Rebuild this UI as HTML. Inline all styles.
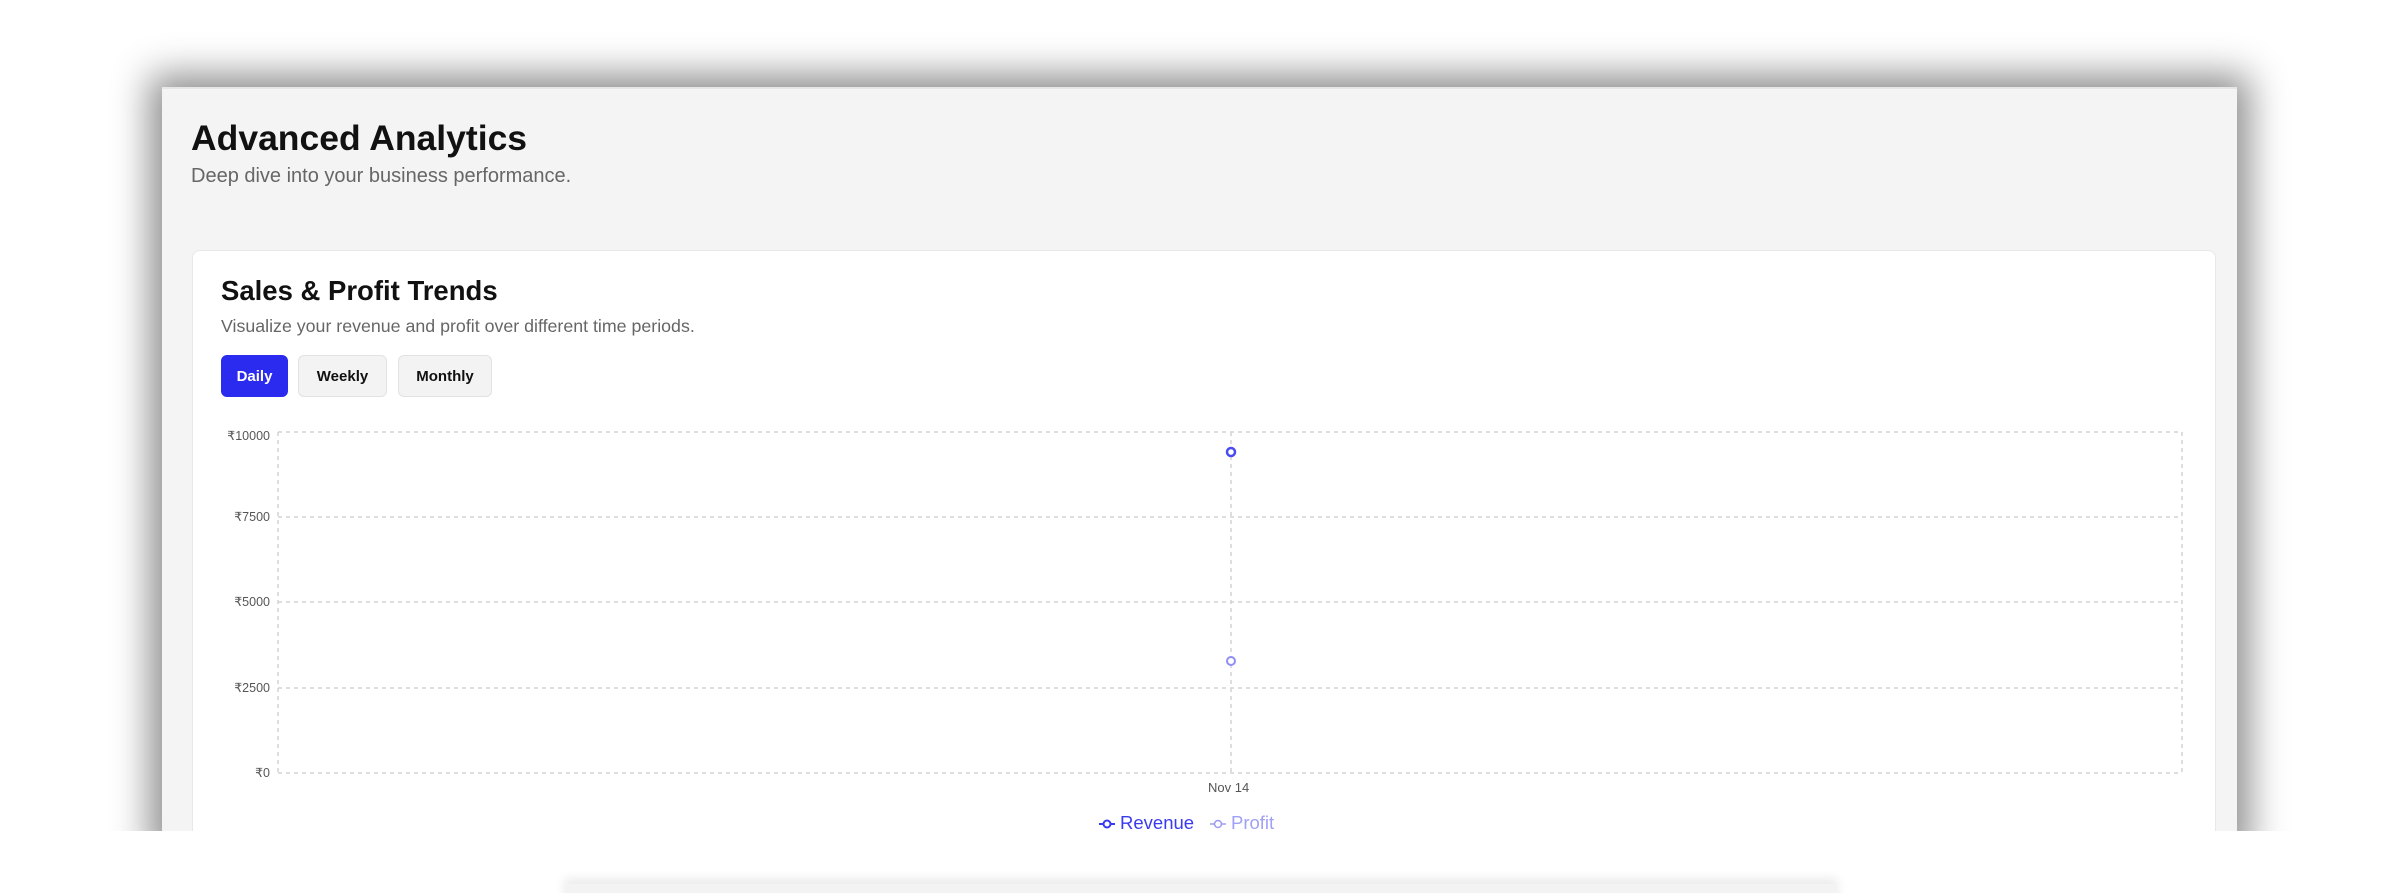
<!DOCTYPE html>
<html><head><meta charset="utf-8"><style>
*{margin:0;padding:0;box-sizing:border-box}
html,body{width:2400px;height:893px;overflow:hidden}
body{background:#fff;position:relative;font-family:"Liberation Sans",sans-serif}
.win{position:absolute;left:162px;top:87px;width:2075px;height:760px;background:#f4f4f4;box-shadow:0 0 35px 12px rgba(0,0,0,.45);border-top:2px solid #e6e6e6}
.a{position:absolute;white-space:nowrap}
.card{position:absolute;left:192px;top:250px;width:2024px;height:640px;background:#fff;border:1px solid #e8e8e8;border-radius:8px}
.btn{position:absolute;top:355px;height:42px;border-radius:6px;font-size:15px;font-weight:bold;line-height:42px;text-align:center;background:#f3f3f3;border:1px solid #e2e2e2;color:#111}
.yl{position:absolute;right:2130px;font-size:12.5px;color:#555;text-align:right}
.cover{position:absolute;left:0;top:831px;width:2400px;height:62px;background:#fff;z-index:5}
.bar{position:absolute;left:566px;top:884px;width:1270px;height:20px;background:#f3f3f3;box-shadow:0 -4px 10px 2px rgba(0,0,0,.08);z-index:6}
</style></head><body>
<div class="win"></div>
<div class="a" style="left:191px;top:118px;font-size:35.5px;font-weight:bold;color:#111">Advanced Analytics</div>
<div class="a" style="left:191px;top:165px;font-size:20px;color:#666">Deep dive into your business performance.</div>
<div class="card"></div>
<div class="a" style="left:221px;top:275px;font-size:27.5px;font-weight:bold;color:#111">Sales &amp; Profit Trends</div>
<div class="a" style="left:221px;top:316px;font-size:17.8px;color:#666">Visualize your revenue and profit over different time periods.</div>
<div class="btn" style="left:221px;width:67px;background:#2b2bf0;border-color:#2b2bf0;color:#fff">Daily</div>
<div class="btn" style="left:298px;width:89px">Weekly</div>
<div class="btn" style="left:398px;width:94px">Monthly</div>
<svg class="a" style="left:0;top:0" width="2400" height="893">
<g stroke="#d4d4d4" stroke-width="1.5" stroke-dasharray="4 4" fill="none">
<line x1="278" y1="432" x2="2182" y2="432"/>
<line x1="278" y1="517" x2="2182" y2="517"/>
<line x1="278" y1="602" x2="2182" y2="602"/>
<line x1="278" y1="688" x2="2182" y2="688"/>
<line x1="278" y1="773" x2="2182" y2="773"/>
<line x1="278" y1="432" x2="278" y2="773"/>
<line x1="2182" y1="432" x2="2182" y2="773"/>
<line x1="1231" y1="432" x2="1231" y2="773"/>
</g>
<circle cx="1231" cy="452" r="4" fill="#fff" stroke="#4b4bf2" stroke-width="2.5"/>
<circle cx="1231" cy="661" r="4" fill="#fff" stroke="#8f8ff5" stroke-width="2"/>
<line x1="1099" y1="824" x2="1115" y2="824" stroke="#3a3af0" stroke-width="2"/>
<circle cx="1107" cy="824" r="3.5" fill="#fff" stroke="#3a3af0" stroke-width="2"/>
<line x1="1210" y1="824" x2="1226" y2="824" stroke="#9a9af5" stroke-width="1.5"/>
<circle cx="1218" cy="824" r="3.5" fill="#fff" stroke="#9a9af5" stroke-width="1.5"/>
</svg>
<div class="yl" style="top:428px">₹10000</div>
<div class="yl" style="top:509px">₹7500</div>
<div class="yl" style="top:594px">₹5000</div>
<div class="yl" style="top:680px">₹2500</div>
<div class="yl" style="top:765px">₹0</div>
<div class="a" style="left:1208px;top:780px;font-size:13px;color:#555">Nov 14</div>
<div class="a" style="left:1120px;top:812px;font-size:18.5px;color:#3a3af0">Revenue</div>
<div class="a" style="left:1231px;top:812px;font-size:18.5px;color:#a0a0f6">Profit</div>
<div class="cover"></div>
<div class="bar"></div>
</body></html>
